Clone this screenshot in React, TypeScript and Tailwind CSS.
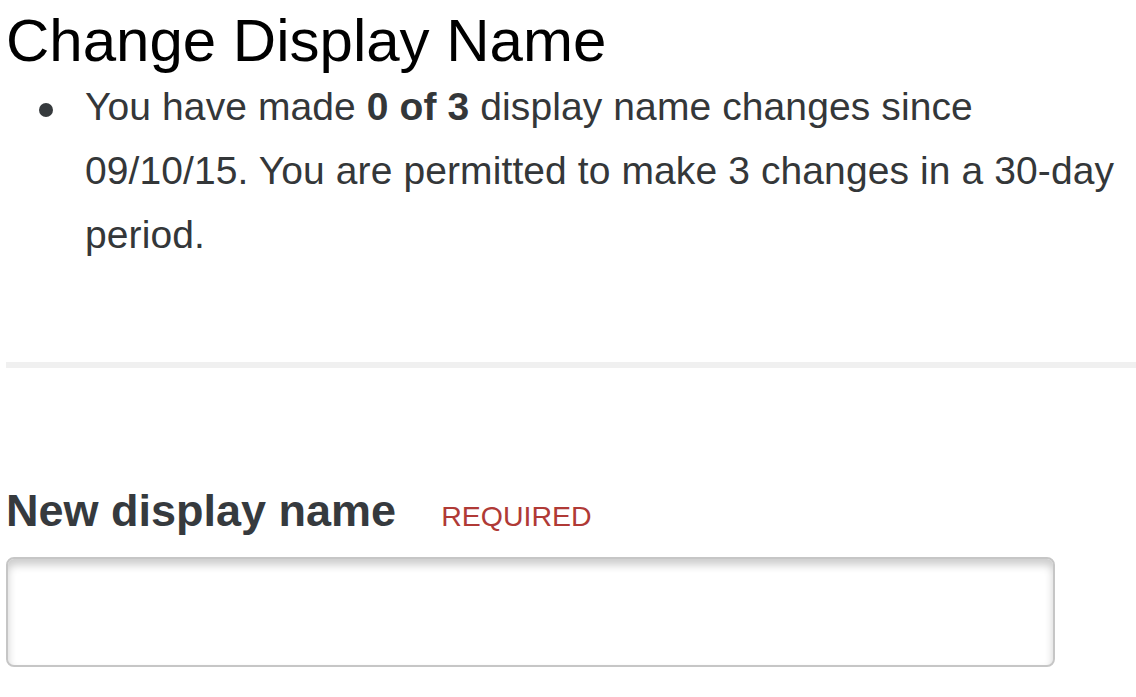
import React from "react";

export default function App() {
  return (
    <div className="min-h-[697px] w-[1136px] bg-white pl-[6px] font-['Liberation_Sans',Arial,sans-serif]">
      <h1 className="pt-[7px] text-[60px] leading-[68px] font-normal text-black">
        Change Display Name
      </h1>
      <div className="flex text-[39px] leading-[64px] text-[#343739]">
        <div className="w-[79px] shrink-0 pl-[33px] pt-[28px]">
          <div className="h-[14px] w-[14px] rounded-full bg-[#363a3d]" />
        </div>
        <p className="tracking-[0.1px]">
          You have made <b className="font-bold">0 of 3</b> display name changes since
          09/10/15. You are permitted to make 3 changes in a 30-day period.
        </p>
      </div>
      <div className="mt-[95px] h-[6px] bg-[#f0f0f0]" />
      <div className="mt-[116px] flex items-baseline">
        <span className="text-[45px] leading-[53px] font-bold text-[#363a3e]">
          New display name
        </span>
        <span className="ml-[45px] text-[28.5px] text-[#b03a36]">REQUIRED</span>
      </div>
      <input
        type="text"
        aria-label="New display name"
        className="mt-[19px] block h-[110px] w-[1049px] rounded-[8px] border-2 border-[#c6c6c6] bg-white shadow-[inset_0_6px_8px_rgba(0,0,0,0.2)] outline-none"
      />
    </div>
  );
}
